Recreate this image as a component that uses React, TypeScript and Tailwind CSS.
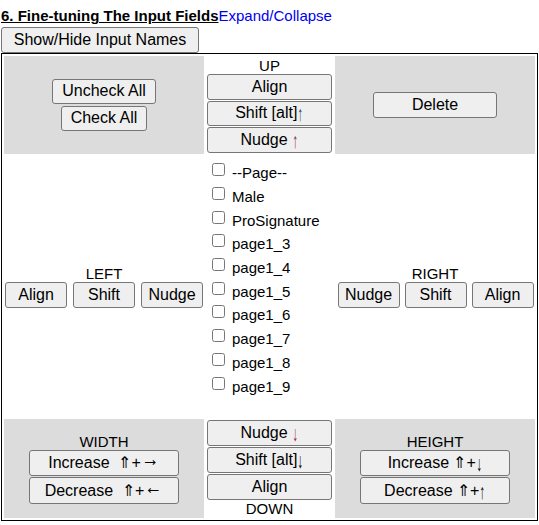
import React from "react";
import clsx from "clsx";

function Btn({ children, className }: { children: React.ReactNode; className?: string }) {
  return (
    <button
      className={clsx(
        "flex items-center justify-center bg-[#efefef] border border-[#767676] rounded-[3px] text-[16px] leading-[18px] text-black whitespace-nowrap",
        className
      )}
    >
      {children}
    </button>
  );
}

const Label = ({ children }: { children: React.ReactNode }) => (
  <div className="text-center text-[15px] leading-[17px]">{children}</div>
);

// setas verticais finas e altas, como no original
const Seta = ({ c, cor }: { c: string; cor?: string }) => (
  <span className={clsx("inline-block text-[21px] leading-[10px] scale-x-[0.55] -mx-[2px] translate-y-[1px]", cor)}>{c}</span>
);

// setas horizontais compridas
const SetaH = ({ c }: { c: string }) => (
  <span className="inline-block text-[21px] leading-[10px] scale-x-[0.85] -mx-[1px] -translate-y-[4px]">{c}</span>
);

const campos = ["--Page--", "Male", "ProSignature", "page1_3", "page1_4", "page1_5", "page1_6", "page1_7", "page1_8", "page1_9"];

export default function App() {
  return (
    <div className="px-[1px] text-black font-['Liberation_Sans',Arial,sans-serif]">
      {/* titulo */}
      <div className="pt-[7px] text-[15px] leading-[17px]">
        <span className="font-bold underline">6. Fine-tuning The Input Fields</span>
        <a className="text-[#0000ee] cursor-pointer">Expand/Collapse</a>
      </div>
      <Btn className="mt-[3px] w-[198px] h-[26px]">Show/Hide Input Names</Btn>

      {/* tabela de controles */}
      <div className="w-[537px] border border-black p-[2px] grid grid-cols-[200px_127px_200px] gap-[2px]">
        {/* linha de cima */}
        <div className="bg-[#dcdcdc] flex flex-col items-center justify-center gap-[1.5px]">
          <Btn className="px-[9px] h-[25.5px]">Uncheck All</Btn>
          <Btn className="px-[9px] h-[25.5px]">Check All</Btn>
        </div>
        <div className="bg-white px-[1px] pt-[1px] pb-[1px] flex flex-col gap-[1px]">
          <Label>UP</Label>
          <div className="flex flex-col gap-[1px] -mt-[1px]">
            <Btn className="w-full h-[25.5px]">Align</Btn>
            <Btn className="w-full h-[25.5px]">
              Shift [alt]<Seta c="↑" cor="text-[#1d3f66]" />
            </Btn>
            <Btn className="w-full h-[25.5px]">
              Nudge&nbsp;<Seta c="↑" cor="text-[#8e1f48]" />
            </Btn>
          </div>
        </div>
        <div className="bg-[#dcdcdc] flex items-center justify-center">
          <Btn className="w-[124px] h-[26px]">Delete</Btn>
        </div>

        {/* linha do meio */}
        <div className="bg-white flex flex-col items-center justify-center">
          <Label>LEFT</Label>
          <div className="flex gap-[6px]">
            <Btn className="w-[62px] h-[26px]">Align</Btn>
            <Btn className="w-[62px] h-[26px]">Shift</Btn>
            <Btn className="w-[62px] h-[26px]">Nudge</Btn>
          </div>
        </div>
        <div className="bg-white pt-[2.5px] pb-[22px]">
          {campos.map((c) => (
            <div key={c} className="flex items-center h-[23.7px]">
              <input type="checkbox" className="m-0 ml-[6px] mr-[7px] w-[13px] h-[13px]" />
              <span className="text-[15px] leading-[17px] pt-[6px]">{c}</span>
            </div>
          ))}
        </div>
        <div className="bg-white flex flex-col items-center justify-center">
          <Label>RIGHT</Label>
          <div className="flex gap-[5px] pl-[1px]">
            <Btn className="w-[62px] h-[26px]">Nudge</Btn>
            <Btn className="w-[62px] h-[26px]">Shift</Btn>
            <Btn className="w-[62px] h-[26px]">Align</Btn>
          </div>
        </div>

        {/* linha de baixo */}
        <div className="bg-[#dcdcdc] flex flex-col items-center justify-center">
          <Label>WIDTH</Label>
          <div className="flex flex-col gap-[1px]">
            <Btn className="w-[150px] h-[26.5px]">
              Increase&nbsp; ⇑+<SetaH c="→" />
            </Btn>
            <Btn className="w-[150px] h-[26.5px]">
              Decrease&nbsp; ⇑+<SetaH c="←" />
            </Btn>
          </div>
        </div>
        <div className="bg-white px-[1px] pt-[1px] pb-[1px] flex flex-col">
          <div className="flex flex-col gap-[1px]">
            <Btn className="w-full h-[26px]">
              Nudge&nbsp;<Seta c="↓" cor="text-[#a3203f]" />
            </Btn>
            <Btn className="w-full h-[26px]">
              Shift [alt]<Seta c="↓" />
            </Btn>
            <Btn className="w-full h-[26px]">Align</Btn>
          </div>
          <Label>DOWN</Label>
        </div>
        <div className="bg-[#dcdcdc] flex flex-col items-center justify-center">
          <Label>HEIGHT</Label>
          <div className="flex flex-col gap-[1px]">
            <Btn className="w-[150px] h-[26.5px]">
              Increase ⇑+<Seta c="↓" />
            </Btn>
            <Btn className="w-[150px] h-[26.5px]">
              Decrease ⇑+<Seta c="↑" />
            </Btn>
          </div>
        </div>
      </div>
    </div>
  );
}
